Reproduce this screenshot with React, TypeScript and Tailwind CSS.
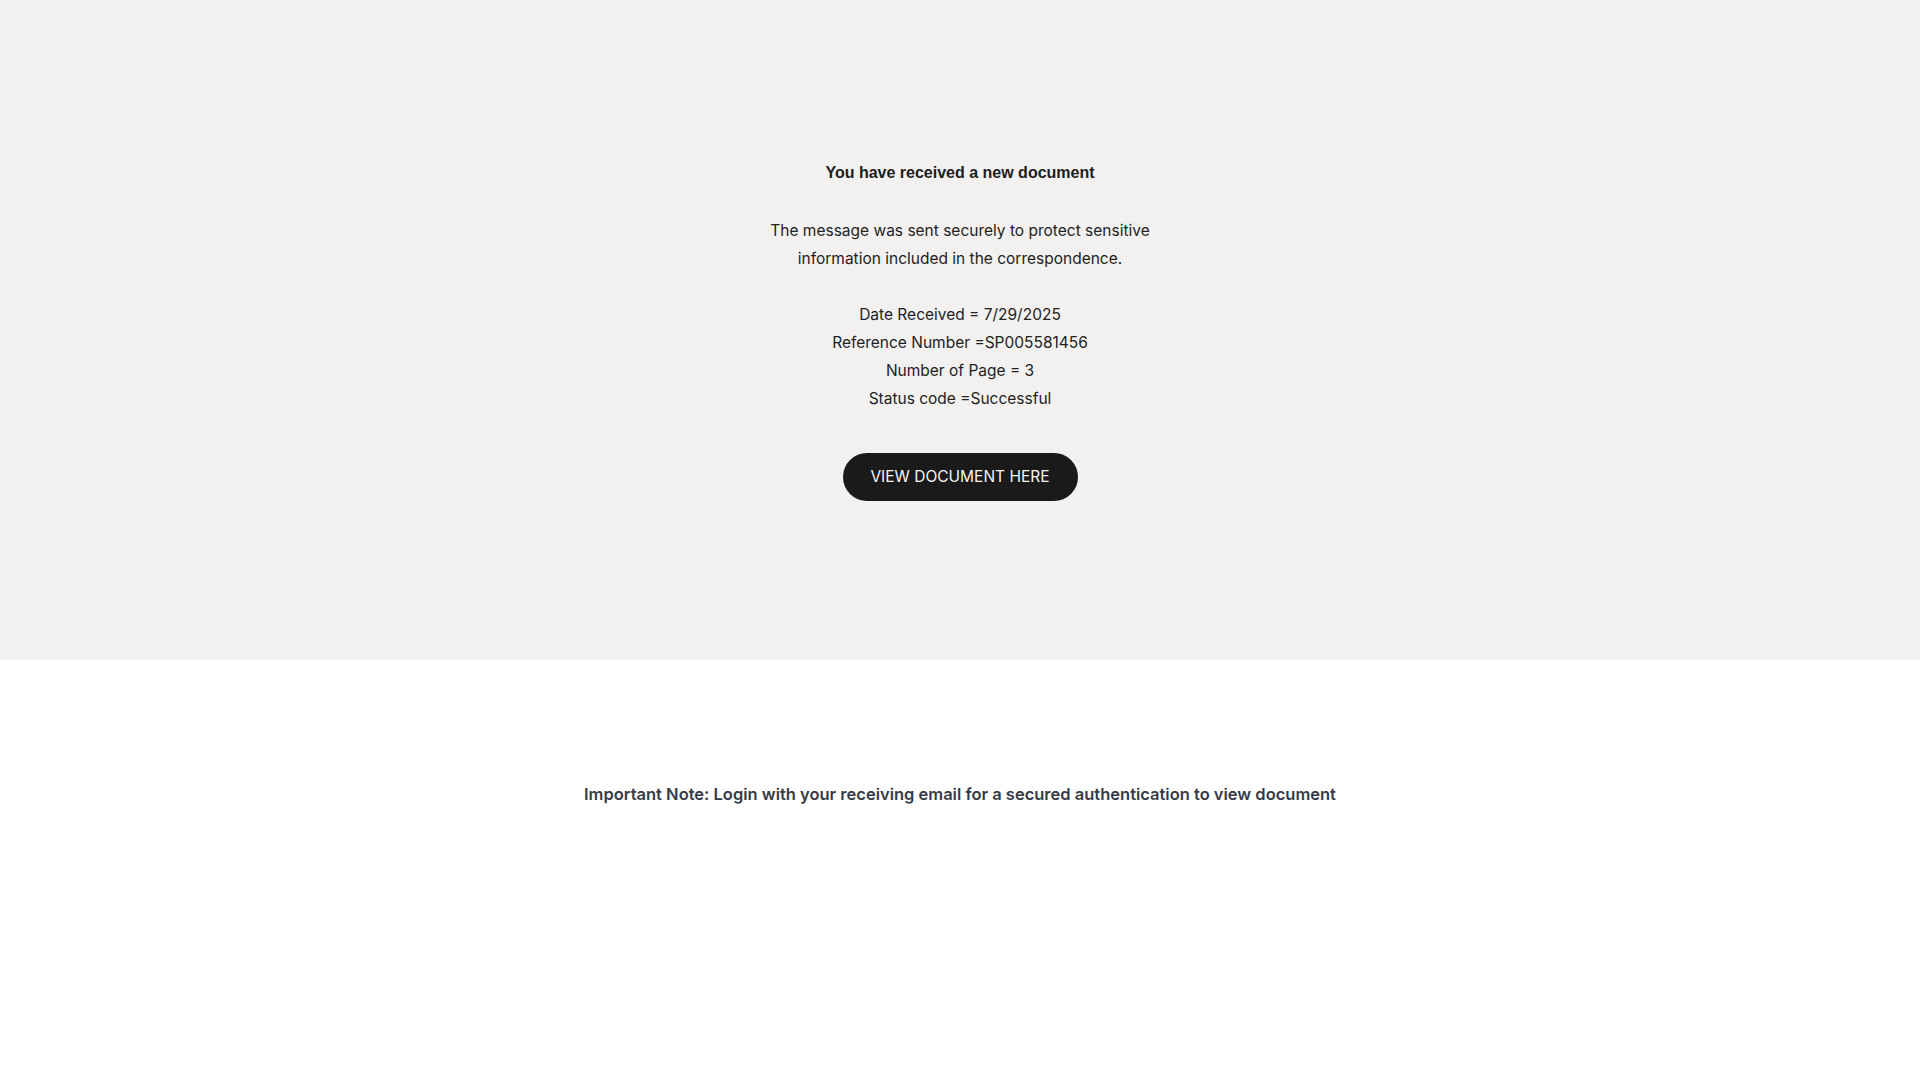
import React from "react";

const body = { fontFamily: '"Inter", "Liberation Sans", sans-serif' };

export default function App() {
  return (
    <div className="min-h-screen w-full bg-white" style={body}>
      <section className="h-[660px] w-full bg-[#f2f1ef] flex flex-col items-center pt-[161px]">
        <h1
          className="text-base leading-6 font-bold text-[#1d1d1d]"
          style={{ fontFamily: '"Liberation Sans", Arial, sans-serif' }}
        >
          You have received a new document
        </h1>
        <div className="mt-[32px] text-center text-[15.5px] leading-[28px] text-[#222222]">
          <p>
            The message was sent securely to protect sensitive
            <br />
            information included in the correspondence.
          </p>
          <p className="mt-[28px]">Date Received = 7/29/2025</p>
          <p>Reference Number =SP005581456</p>
          <p>Number of Page = 3</p>
          <p>Status code =Successful</p>
        </div>
        <button
          type="button"
          className="mt-[40px] h-12 w-[235px] rounded-full bg-[#1a1a1a] text-[15.5px] text-[#f4f4f4] uppercase"
        >
          View Document Here
        </button>
      </section>
      <section className="w-full flex justify-center pt-[122px]">
        <p className="text-[16.5px] leading-6 font-semibold text-[#363b47]">
          Important Note: Login with your receiving email for a secured authentication to view document
        </p>
      </section>
    </div>
  );
}
